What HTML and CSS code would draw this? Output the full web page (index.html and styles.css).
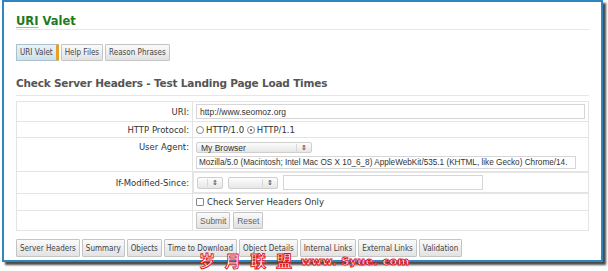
FILE: index.html
```html
<!DOCTYPE html>
<html lang="en">
<head>
    <meta charset="UTF-8">
    <title>URI Valet</title>
    <link rel="stylesheet" href="styles.css">
</head>
<body>

    <div class="frame">
        <h1 class="title"><span class="typo">URI</span> Valet</h1>

        <div class="tabs">
            <span class="btn active">URI Valet</span>
            <span class="btn">Help Files</span>
            <span class="btn">Reason Phrases</span>
        </div>

        <h2 class="heading">Check Server Headers - Test Landing Page Load Times</h2>

        <table class="form">
            <tr class="row-uri">
                <td class="label">URI:</td>
                <td><input class="text uri" type="text" value="http://www.seomoz.org"></td>
            </tr>
            <tr class="row-proto">
                <td class="label">HTTP Protocol:</td>
                <td>
                    <span class="radio"></span>HTTP/1.0
                    <span class="radio on"></span>HTTP/1.1
                </td>
            </tr>
            <tr class="row-agent">
                <td class="label top">User Agent:</td>
                <td>
                    <div class="select wide">My Browser <span class="arrows">&#8661;</span></div>
                    <input class="text agent" type="text" value="Mozilla/5.0 (Macintosh; Intel Mac OS X 10_6_8) AppleWebKit/535.1 (KHTML, like Gecko) Chrome/14.">
                </td>
            </tr>
            <tr class="row-mod">
                <td class="label">If-Modified-Since:</td>
                <td class="mod">
                    <div class="select small"><span class="arrows">&#8661;</span></div>
                    <div class="select medium"><span class="arrows">&#8661;</span></div>
                    <input class="text date" type="text">
                </td>
            </tr>
            <tr class="row-check">
                <td class="label"></td>
                <td><span class="checkbox"></span>Check Server Headers Only</td>
            </tr>
            <tr class="row-submit">
                <td class="label"></td>
                <td>
                    <span class="btn plain">Submit</span>
                    <span class="btn plain">Reset</span>
                </td>
            </tr>
        </table>

        <div class="reports">
            <span class="btn">Server Headers</span>
            <span class="btn">Summary</span>
            <span class="btn">Objects</span>
            <span class="btn">Time to Download</span>
            <span class="btn">Object Details</span>
            <span class="btn">Internal Links</span>
            <span class="btn">External Links</span>
            <span class="btn">Validation</span>
        </div>
    </div>

    <div class="watermark">
        <span class="cn">岁 月 联 盟</span>
        <span class="url">www. Syue. com</span>
    </div>

</body>
</html>
```

FILE: styles.css
```css
body {
    margin: 0;
    background: #fff;
    font-family: "DejaVu Sans", Verdana, sans-serif;
    color: #333;
    position: relative;
    min-height: 271px;
}

.frame {
    margin-left: 2px;
    width: 585px;
    height: 258px;
    border: 2px solid #2f86c0;
    box-shadow: 3px 3px 2px #4a4a4a;
    padding: 0 0 0 12px;
}

.title {
    margin: 0 12px 0 0;
    padding: 12px 0 0 0;
    height: 15px;
    font-size: 11.5px;
    font-weight: bold;
    color: #217a21;
    border-bottom: 1px solid #e6e6e6;
}

.typo {
    text-decoration: underline #e99;
    text-decoration-thickness: 1px;
    text-underline-offset: 2px;
}

.tabs {
    display: flex;
    gap: 2px;
    margin-top: 14px;
    height: 17px;
}

.btn {
    display: inline-flex;
    align-items: center;
    height: 15px;
    padding: 0 3px;
    font-family: "DejaVu Sans Condensed", "DejaVu Sans", sans-serif;
    font-size: 8px;
    color: #444;
    background: linear-gradient(#fafafa, #e2e2e2);
    border: 1px solid #c4c4c4;
    border-radius: 1px;
    white-space: nowrap;
}

.btn.active {
    background: linear-gradient(#e9f3f8, #cfe1ea);
    border-color: #a9c2cf;
    border-right: 3px solid #e6a026;
}

.heading {
    margin: 16px 12px 0 0;
    padding-bottom: 6px;
    font-size: 10.5px;
    font-weight: bold;
    color: #555;
    border-bottom: 1px solid #e6e6e6;
    letter-spacing: -0.2px;
}

.form {
    margin-top: 5px;
    width: 573px;
    border-collapse: collapse;
    font-size: 8.5px;
}

.form td {
    border: 1px solid #e4e4e4;
    padding: 0 3px;
    vertical-align: middle;
}

.form td.label {
    width: 170px;
    text-align: right;
    padding-right: 3px;
}

.form td.top {
    vertical-align: top;
    padding-top: 4px;
}

.row-uri { height: 20px; }
.row-proto { height: 16px; }
.row-agent { height: 34px; }
.row-mod { height: 20px; }
.row-check { height: 17px; }
.row-submit { height: 20px; }

.text {
    box-sizing: border-box;
    border: 1px solid #d6d6d6;
    font-family: "Liberation Sans", Arial, sans-serif;
    font-size: 8.5px;
    color: #333;
    padding: 0 3px;
    background: #fff;
}

.uri {
    width: 389px;
    height: 15px;
    display: block;
}

.agent {
    display: block;
    width: 380px;
    height: 13px;
    margin-top: 3px;
    font-size: 8.2px;
    padding: 0 2px;
}

.radio {
    display: inline-block;
    width: 6px;
    height: 6px;
    border: 1px solid #888;
    border-radius: 50%;
    vertical-align: -1px;
    margin-right: 2px;
    position: relative;
}

.radio.on::after {
    content: "";
    position: absolute;
    left: 2px;
    top: 2px;
    width: 2px;
    height: 2px;
    border-radius: 50%;
    background: #444;
}

.select {
    box-sizing: border-box;
    display: flex;
    align-items: center;
    justify-content: space-between;
    height: 11px;
    padding: 0 4px;
    border: 1px solid #cfcfcf;
    border-radius: 2px;
    background: linear-gradient(#fdfdfd, #e6e6e6);
    font-family: "Liberation Sans", Arial, sans-serif;
    font-size: 8.5px;
    color: #333;
}

.arrows {
    font-size: 7px;
    color: #333;
    padding-left: 4px;
    border-left: 1px solid #d8d8d8;
}

.wide {
    width: 116px;
    margin-top: 2px;
}

.mod {
    display: flex;
    align-items: center;
    gap: 5px;
}

.form td.mod {
    height: 19px;
}

.small { width: 26px; height: 12px; justify-content: flex-end; }
.medium { width: 50px; height: 12px; justify-content: flex-end; }

.date {
    width: 200px;
    height: 15px;
}

.checkbox {
    display: inline-block;
    width: 6px;
    height: 6px;
    border: 1px solid #888;
    border-radius: 1px;
    margin-right: 3px;
    vertical-align: -1px;
}

.btn.plain {
    height: 15px;
    padding: 0 3px;
    font-family: "Liberation Sans", Arial, sans-serif;
    font-size: 8.5px;
    color: #666;
}

.reports {
    display: flex;
    gap: 2px;
    margin-top: 8px;
}

.reports .btn {
    height: 16px;
}

/* watermark stamped over the bottom of the screenshot */
.watermark {
    position: absolute;
    left: 199px;
    top: 251px;
    z-index: 5;
    display: flex;
    align-items: flex-end;
    gap: 6px;
    color: #fff;
    -webkit-text-stroke: 0.9px #e01414;
    white-space: nowrap;
}

.cn {
    font-family: "Noto Sans CJK SC", sans-serif;
    font-weight: bold;
    font-size: 16px;
    line-height: 19px;
    letter-spacing: 3px;
}

.url {
    font-family: "DejaVu Sans", sans-serif;
    font-weight: bold;
    font-size: 11px;
    line-height: 16px;
    letter-spacing: 0.5px;
}
```
